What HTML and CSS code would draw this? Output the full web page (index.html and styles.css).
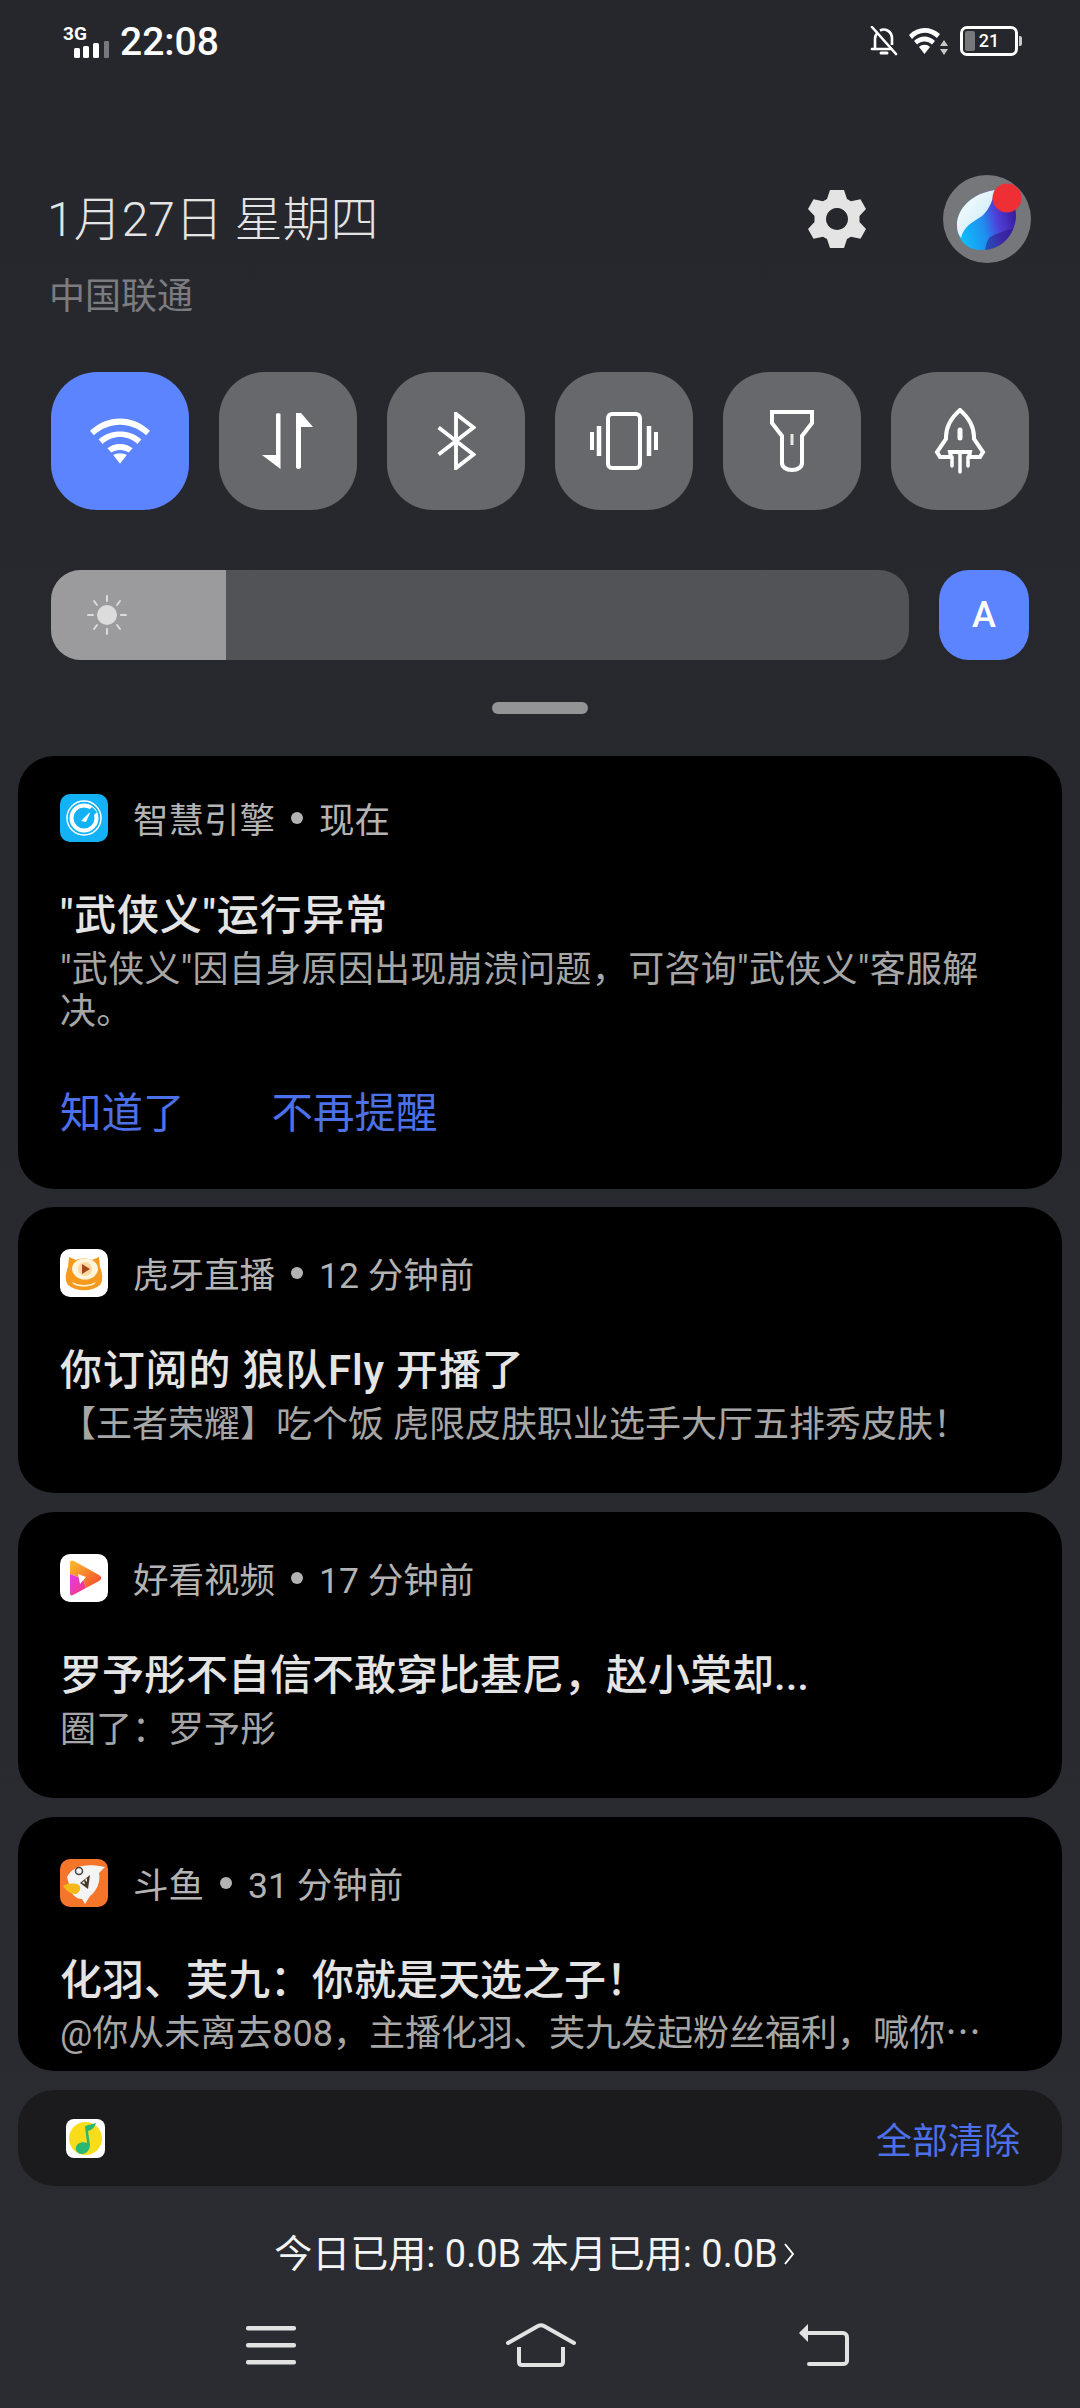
FILE: index.html
```html
<!DOCTYPE html>
<html lang="zh-CN">

<head>
  <meta charset="UTF-8">
  <meta name="viewport" content="width=device-width, initial-scale=1.0">
  <title>通知中心</title>
  <link rel="stylesheet" href="styles.css">
</head>

<body>
  <div class="status-bar">
    <div class="status-left">
      <div class="signal">
        <span class="signal-text">3G</span>
        <svg class="signal-bars" width="36" height="17" viewBox="0 0 36 17">
          <rect x="0" y="7" width="6" height="10" rx="1.5" fill="#fff"/>
          <rect x="9" y="5" width="6" height="12" rx="1.5" fill="#fff"/>
          <rect x="19" y="2" width="6" height="15" rx="1.5" fill="#fff"/>
          <rect x="30" y="0" width="5" height="17" rx="1" fill="#77787b"/>
        </svg>
      </div>
      <span class="time">22:08</span>
    </div>
    <div class="status-right">
      <svg width="28" height="30" viewBox="0 0 28 30" fill="none" stroke="#fff" stroke-width="2.6">
        <path d="M5 22.500V13c0-3 1.200-5 3-6.500M10 4.500c5-2.500 12 .5 12 8V19"/>
        <path d="M2 23h19" stroke-linecap="round"/>
        <path d="M2 1l24 27" stroke-linecap="round"/>
        <path d="M11 27h6" stroke-width="3" stroke-linecap="round"/>
      </svg>
      <svg width="40" height="30" viewBox="0 0 40 30">
        <path d="M0 9C9 0 21 0 31 8l-3 4C20 5 10 5 3 13z" fill="#fff"/>
        <path d="M5 15c6-6 15-6 21 0l-3 3.500c-4-4-11-4-15 0z" fill="#fff"/>
        <path d="M10 21c3-3 8-3 11 0l-5.500 7z" fill="#fff"/>
        <path d="M35 14l4 6h-8zM31 23h8l-4 6z" fill="#c9c9ca"/>
      </svg>
      <div class="battery">
        <div class="battery-level"></div>
        <span class="battery-num">21</span>
        <div class="battery-tip"></div>
      </div>
    </div>
  </div>

  <div class="head">
    <div class="head-text">
      <div class="date">1月27日 星期四</div>
      <div class="carrier">中国联通</div>
    </div>
    <svg class="gear" width="58" height="60" viewBox="0 0 58 60">
      <path fill-rule="evenodd" fill="#e4e4e4" d="M22 1h14l3 9 4 2.300 9.500-2L58 20l-6.500 7v6l6.500 7-5.500 9.700-9.500-2L39 50l-3 9H22l-3-9-4-2.300-9.500 2L0 40l6.500-7v-6L0 20l5.500-9.700 9.500 2L19 10zM29 19a11 11 0 1 0 .01 0z"/>
    </svg>
    <div class="avatar">
      <svg width="88" height="88" viewBox="0 0 88 88">
        <defs>
          <linearGradient id="orbBody" x1="0" y1="0.75" x2="1" y2="0.5">
            <stop offset="0" stop-color="#0cc4fb"/>
            <stop offset="0.45" stop-color="#1f8ff0"/>
            <stop offset="0.7" stop-color="#4f3fd8"/>
            <stop offset="1" stop-color="#3a1ca0"/>
          </linearGradient>
          <linearGradient id="orbWhite" x1="0" y1="0" x2="1" y2="1">
            <stop offset="0" stop-color="#ffffff"/>
            <stop offset="1" stop-color="#bfe6f8"/>
          </linearGradient>
        </defs>
        <path d="M14 50C14 33 30 18 52 15c12 1 22 13 21 27-1 18-15 33-35 33C24 75 14 65 14 50z" fill="url(#orbBody)"/>
        <path d="M47 62c7-4 16-7 23-8-4 11-14 20-28 21 1-5 2-10 5-13z" fill="#2d1680" opacity="0.55"/>
        <path d="M18 63c-3-4-4-8-4-13C14 33 30 18 52 15c-2 9-5 19-13 26-8 6-17 8-21 22z" fill="url(#orbWhite)"/>
        <circle cx="64" cy="23" r="14.500" fill="#ee2f36"/>
      </svg>
    </div>
  </div>

  <div class="toggles">
    <div class="toggle active">
      <svg width="60" height="46" viewBox="0 0 62 47" fill="#fff">
        <path d="M0 13C18-4 44-4 62 13l-4 4.500C42 3 20 3 4 17.500z"/>
        <path d="M9 22c12-11 32-11 44 0l-4 4.500C39 17 23 17 13 26.500z"/>
        <path d="M18 31c7-6 19-6 26 0l-4 4.500c-5-3.500-13-3.500-18 0z"/>
        <path d="M24 38c4-2 10-2 14 0l-7 9z"/>
      </svg>
    </div>
    <div class="toggle">
      <svg width="52" height="56" viewBox="0 0 52 56" fill="#fff">
        <path d="M14 1c0-1 4.500-1 4.500 0v55L0 42h14z"/>
        <path d="M34 0h5v54c0 2.500-5 2.500-5 0z"/>
        <path d="M39 0l12 14H39z"/>
      </svg>
    </div>
    <div class="toggle">
      <svg width="40" height="58" viewBox="0 0 40 60" fill="none" stroke="#fff" stroke-width="4">
        <path d="M2 16l36 28-18 14V2l18 14L2 44"/>
      </svg>
    </div>
    <div class="toggle">
      <svg width="68" height="58" viewBox="0 0 68 58" fill="none" stroke="#fff">
        <rect x="18" y="2" width="32" height="54" rx="4" stroke-width="4"/>
        <path d="M9 14v30M59 14v30" stroke-width="4.500"/>
        <path d="M2 20v18M66 20v18" stroke-width="4"/>
      </svg>
    </div>
    <div class="toggle">
      <svg width="44" height="62" viewBox="0 0 44 62" fill="none" stroke="#fff" stroke-width="4">
        <path d="M2 2h40v11L32 26v27c0 4-4 7-10 7s-10-3-10-7V26L2 13z"/>
        <path d="M22 24v11" stroke-width="3" stroke="#e8e8e8"/>
      </svg>
    </div>
    <div class="toggle">
      <svg width="52" height="66" viewBox="0 0 52 66" fill="none" stroke="#fff" stroke-width="4">
        <path d="M26 2c9 8 14 17 14 27v2l9 13-3 5H35l1-5H16l1 5H6l-3-5 9-13v-2c0-10 5-19 14-27z"/>
        <path d="M26 22v8" stroke-width="5" stroke-linecap="round"/>
        <path d="M18 49v9M34 49v9M26 46v18" stroke-width="3.500" stroke-linecap="round"/>
      </svg>
    </div>
  </div>

  <div class="brightness">
    <div class="slider">
      <div class="slider-fill">
        <svg width="40" height="40" viewBox="0 0 40 40" stroke="#dcdcdc" stroke-width="2" stroke-linecap="round">
          <circle cx="20" cy="20" r="10" fill="#dcdcdc" stroke="none"/>
          <path d="M20 1v5M20 34v5M1 20h5M34 20h5M7 6l3 4M33 6l-3 4M7 34l3-4M33 34l-3-4"/>
        </svg>
      </div>
    </div>
    <div class="auto-btn">A</div>
  </div>

  <div class="handle"></div>

  <div class="notif notif-first">
    <div class="notif-head">
      <svg class="app-icon" width="48" height="48" viewBox="0 0 48 48">
        <rect width="48" height="48" rx="10" fill="#13b1f5"/>
        <circle cx="24" cy="24" r="17" fill="none" stroke="#fff" stroke-width="1.500"/>
        <circle cx="24" cy="24" r="12.500" fill="none" stroke="#fff" stroke-width="4"/>
        <path d="M21 27l10-10-5 11z" fill="#fff"/>
        <path d="M32 13l5 5-4 4-5-5z" fill="#13b1f5"/>
      </svg>
      <span class="notif-app">智慧引擎</span><span class="dot"></span><span class="notif-app">现在</span>
    </div>
    <div class="notif-title wide">"武侠义"运行异常</div>
    <div class="notif-body body-wide">"武侠义"因自身原因出现崩溃问题，可咨询"武侠义"客服解决。</div>
    <div class="notif-actions">
      <span class="action">知道了</span>
      <span class="action">不再提醒</span>
    </div>
  </div>

  <div class="notif">
    <div class="notif-head">
      <svg class="app-icon" width="48" height="48" viewBox="0 0 48 48">
        <rect width="48" height="48" rx="10" fill="#fff"/>
        <path d="M9 8l7 3c5-2 11-2 16 0l7-3 1 10c3 7 3 14 0 18-8 7-24 7-32 0-3-4-3-11 0-18z" fill="#f59a1c"/>
        <ellipse cx="25" cy="20" rx="13" ry="10.500" fill="#fff4dc"/>
        <circle cx="25" cy="20" r="7" fill="#fbd9a0"/>
        <path d="M22 15l8 5-8 5z" fill="#a8471c"/>
        <path d="M12 33c8 4 16 4 24 0-2 6-22 6-24 0z" fill="#fff4dc"/>
      </svg>
      <span class="notif-app">虎牙直播</span><span class="dot"></span><span class="notif-app">12 分钟前</span>
    </div>
    <div class="notif-title wide">你订阅的 狼队Fly 开播了</div>
    <div class="notif-body">【王者荣耀】吃个饭 虎限皮肤职业选手大厅五排秀皮肤！</div>
  </div>

  <div class="notif">
    <div class="notif-head">
      <svg class="app-icon" width="48" height="48" viewBox="0 0 48 48">
        <defs>
          <linearGradient id="playTop" x1="0" y1="0" x2="1" y2="1">
            <stop offset="0" stop-color="#fbc02d"/>
            <stop offset="1" stop-color="#f4432c"/>
          </linearGradient>
          <linearGradient id="playLow" x1="0" y1="0" x2="1" y2="1">
            <stop offset="0" stop-color="#e23bf0"/>
            <stop offset="1" stop-color="#f83a6e"/>
          </linearGradient>
        </defs>
        <rect width="48" height="48" rx="10" fill="#fff"/>
        <path d="M10 9c0-3 2-3 4-2l25 14c3 2 3 4 0 6L26 34l-3-9-13-5z" fill="url(#playTop)"/>
        <path d="M10 20l13 5 3 9-13 7c-2 1-3 0-3-2z" fill="url(#playLow)"/>
        <path d="M18 20l8 3-6 7z" fill="#fff"/>
      </svg>
      <span class="notif-app">好看视频</span><span class="dot"></span><span class="notif-app">17 分钟前</span>
    </div>
    <div class="notif-title">罗予彤不自信不敢穿比基尼，赵小棠却...</div>
    <div class="notif-body">圈了：罗予彤</div>
  </div>

  <div class="notif notif-cut">
    <div class="notif-head">
      <svg class="app-icon" width="48" height="48" viewBox="0 0 48 48">
        <rect width="48" height="48" rx="10" fill="#f5752b"/>
        <path d="M7 18C13 7 25 4 45 8l-6 6c2 9-3 19-9 23l-5 8-3-5c-6 0-11-5-12-11z" fill="#f4f4f4"/>
        <path d="M3 27c5-3 12-3 16-1 3 3 0 8-3 9-5 0-10-3-13-8z" fill="#f7b919"/>
        <circle cx="19" cy="12" r="3.500" fill="none" stroke="#444" stroke-width="1.500"/>
        <path d="M20 24l10-8-2 14z" fill="#4a3a2a"/>
        <path d="M22 24l2-2 1 3zM25 21l2-2 0 4z" fill="#fff"/>
      </svg>
      <span class="notif-app">斗鱼</span><span class="dot"></span><span class="notif-app">31 分钟前</span>
    </div>
    <div class="notif-title">化羽、芙九：你就是天选之子！</div>
    <div class="notif-body notif-tight">@你从未离去808，主播化羽、芙九发起粉丝福利，喊你⋯</div>
  </div>

  <div class="clear-bar">
    <svg width="39" height="39" viewBox="0 0 39 39">
      <rect width="39" height="39" rx="8" fill="#fff"/>
      <circle cx="19.500" cy="19.500" r="16.500" fill="#f9dc1a"/>
      <path d="M19 7l11-3c-1 4-4 7-8 8l2 14c0 5-4 9-8 9s-7-3-6-7 7-6 11-4z" fill="#2bb673"/>
    </svg>
    <span class="clear-btn">全部清除</span>
  </div>

  <div class="usage">今日已用: 0.0B 本月已用: 0.0B <svg width="10" height="22" viewBox="0 0 10 22" fill="none" stroke="#fff" stroke-width="2"><path d="M1 1l8 10-8 10"/></svg></div>

  <div class="nav">
    <svg width="50" height="40" viewBox="0 0 50 40" fill="#e2e2e2">
      <rect y="1" width="50" height="4.500" rx="2"/>
      <rect y="18" width="50" height="4.500" rx="2"/>
      <rect y="35" width="50" height="4.500" rx="2"/>
    </svg>
    <svg class="nav-home" width="70" height="44" viewBox="0 0 70 44" fill="none" stroke="#e2e2e2" stroke-width="4" stroke-linecap="round">
      <path d="M2 20L32 3c2-1 4-1 6 0l30 17"/>
      <path d="M13 24v15c0 2 1 3 3 3h38c2 0 3-1 3-3V24" stroke-linecap="butt"/>
    </svg>
    <svg width="50" height="44" viewBox="0 0 50 44" fill="none" stroke="#e2e2e2" stroke-width="4" stroke-linecap="round">
      <path d="M3 10h41c2 0 4 2 4 4v24c0 2-2 3-4 3H10"/>
      <path d="M0 10l9-9v18z" fill="#e2e2e2" stroke="none"/>
    </svg>
  </div>
</body>

</html>
```

FILE: styles.css
```css
* {
  box-sizing: border-box;
}

body {
  margin: 0;
  width: 1080px;
  height: 2408px;
  overflow: hidden;
  background: linear-gradient(#26272c, #2b2c31);
  font-family: Roboto, "Noto Sans CJK SC", sans-serif;
  color: #fff;
}

.status-bar {
  height: 62px;
  padding: 26px 62px 0 63px;
  display: flex;
  justify-content: space-between;
  align-items: flex-start;
}

.status-left {
  display: flex;
  align-items: center;
  gap: 11px;
}

.signal {
  width: 46px;
  height: 32px;
  display: flex;
  flex-direction: column;
}

.signal-text {
  font-size: 19px;
  font-weight: 700;
  line-height: 15px;
}

.signal-bars {
  margin-left: 11px;
}

.time {
  font-size: 39px;
  font-weight: 500;
  line-height: 32px;
}

.status-right {
  display: flex;
  align-items: center;
  gap: 11px;
}

.battery {
  position: relative;
  width: 58px;
  height: 30px;
  border: 3px solid #fff;
  border-radius: 7px;
  display: flex;
  align-items: center;
  justify-content: center;
}

.battery-level {
  position: absolute;
  left: 2px;
  top: 2px;
  bottom: 2px;
  width: 10px;
  background: #77787b;
  border-radius: 2px;
}

.battery-num {
  font-size: 18px;
  font-weight: 500;
  line-height: 18px;
}

.battery-tip {
  position: absolute;
  right: -7px;
  top: 7px;
  width: 3px;
  height: 10px;
  background: #c9c9ca;
  border-radius: 0 2px 2px 0;
}

.head {
  height: 197px;
  margin-top: 113px;
  padding: 0 49px 0 47px;
  display: flex;
  align-items: flex-start;
}

.head-text {
  flex: 1;
}

.date {
  font-size: 48px;
  font-weight: 300;
  line-height: 52px;
  margin-top: 19px;
  color: #e4e4e4;
}

.carrier {
  font-size: 36px;
  line-height: 44px;
  margin: 29px 0 0 2px;
  color: #7b7c80;
}

.gear {
  margin: 14px 77px 0 0;
}

.avatar {
  width: 88px;
  height: 88px;
  border-radius: 50%;
  background: #76777b;
}

.toggles {
  padding: 0 51px;
  display: flex;
  justify-content: space-between;
}

.toggle {
  width: 138px;
  height: 138px;
  border-radius: 46px;
  background: #67686c;
  display: flex;
  align-items: center;
  justify-content: center;
}

.toggle.active {
  background: #5b84fe;
}

.brightness {
  margin-top: 60px;
  padding: 0 51px;
  display: flex;
  justify-content: space-between;
}

.slider {
  width: 858px;
  height: 90px;
  border-radius: 30px;
  background: #525357;
  overflow: hidden;
}

.slider-fill {
  width: 175px;
  height: 90px;
  background: #9b9b9d;
  padding: 25px 0 0 36px;
}

.auto-btn {
  width: 90px;
  height: 90px;
  border-radius: 30px;
  background: #5b84fe;
  font-size: 36px;
  font-weight: 500;
  line-height: 90px;
  text-align: center;
}

.handle {
  width: 96px;
  height: 12px;
  margin: 42px auto 42px;
  border-radius: 6px;
  background: #939496;
}

.notif {
  height: 286px;
  margin: 0 18px 19px;
  padding: 42px 42px 0;
  border-radius: 36px;
  background: #000;
  overflow: hidden;
}

.notif-first {
  height: 433px;
  margin-bottom: 18px;
  padding-top: 38px;
}

.notif-cut {
  height: 254px;
}

.notif-head {
  height: 48px;
  display: flex;
  align-items: center;
}

.app-icon {
  margin-right: 25px;
  flex-shrink: 0;
}

.notif-app {
  padding-top: 5px;
  font-size: 35.500px;
  line-height: 48px;
  color: #b3b3b3;
}

.dot {
  width: 12px;
  height: 12px;
  margin: 0 16px;
  border-radius: 50%;
  background: #b3b3b3;
}

.notif-title {
  margin-top: 46px;
  font-size: 42px;
  font-weight: 500;
  line-height: 56px;
  color: #e4e4e4;
}

.wide {
  letter-spacing: 0.8px;
}

.notif-body {
  margin-top: 5px;
  font-size: 36px;
  line-height: 42px;
  color: #a6a6a6;
}

.body-wide {
  letter-spacing: 0.3px;
}

.notif-tight {
  margin-top: 4px;
}

.notif-actions {
  margin-top: 53px;
  display: flex;
  gap: 87px;
}

.action {
  font-size: 41.500px;
  line-height: 56px;
  color: #4c70e8;
}

.clear-bar {
  height: 96px;
  margin: 0 18px;
  padding: 0 42px 0 48px;
  border-radius: 36px;
  background: #1b1b1e;
  display: flex;
  align-items: center;
  justify-content: space-between;
}

.clear-btn {
  font-size: 36px;
  color: #4c70e8;
}

.usage {
  margin-top: 43px;
  height: 50px;
  padding-right: 12px;
  font-size: 38px;
  line-height: 50px;
  color: #f4f4f4;
  display: flex;
  align-items: center;
  justify-content: center;
  gap: 6px;
}

.nav {
  margin-top: 44px;
  padding: 0 231px 0 246px;
  display: flex;
  justify-content: space-between;
  align-items: center;
}

.nav-home {
  margin-right: 13px;
}
```
